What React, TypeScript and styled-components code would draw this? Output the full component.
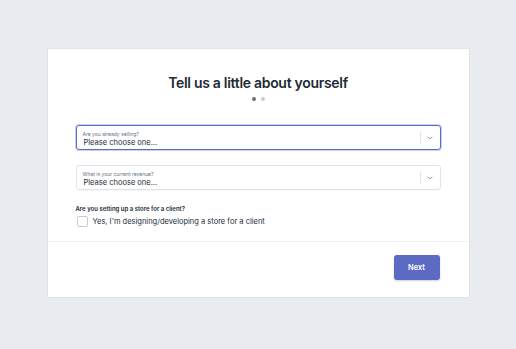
import React from "react";
import styled, { createGlobalStyle } from "styled-components";

const GlobalStyle = createGlobalStyle`
  html, body {
    margin: 0;
    padding: 0;
    background: #e8ebef;
    font-family: Inter, "Noto Sans", sans-serif;
    color: #212b36;
  }
`;

const Page = styled.div`
  width: 516px;
  height: 349px;
  display: flex;
  align-items: flex-start;
  justify-content: center;
  padding-top: 49px;
  box-sizing: border-box;
`;

const Card = styled.div`
  width: 421px;
  height: 248px;
  background: #ffffff;
  box-shadow: 0 0 0 1px rgba(63, 63, 68, 0.04);
  display: flex;
  flex-direction: column;
`;

const Body = styled.div`
  padding: 25px 28px 0;
  display: flex;
  flex-direction: column;
`;

const Title = styled.h1`
  margin: 0;
  text-align: center;
  font-size: 14px;
  font-weight: 600;
  letter-spacing: -0.3px;
  line-height: 17px;
  color: #212b36;
`;

const Dots = styled.div`
  display: flex;
  justify-content: center;
  gap: 5px;
  margin-top: 6px;
  margin-bottom: 24px;
`;

const Dot = styled.span<{ $active?: boolean }>`
  width: 4px;
  height: 4px;
  border-radius: 50%;
  background: ${(p) => (p.$active ? "#637381" : "#c4cdd5")};
`;

const Select = styled.div<{ $focused?: boolean }>`
  height: 25px;
  box-sizing: border-box;
  border: 1px solid ${(p) => (p.$focused ? "#5c6ac4" : "#dfe3e8")};
  box-shadow: ${(p) =>
    p.$focused ? "0 0 0 1px rgba(92,106,196,0.3)" : "0 1px 0 rgba(22,29,37,0.03)"};
  border-radius: 3px;
  display: flex;
  align-items: center;
  margin-bottom: 15px;
`;

const SelectText = styled.div`
  flex: 1;
  padding: 3px 0 0 6px;
  display: flex;
  flex-direction: column;
`;

const SelectLabel = styled.span`
  font-size: 5px;
  color: #637381;
  line-height: 7px;
`;

const SelectValue = styled.span`
  font-size: 7.5px;
  color: #212b36;
  line-height: 10px;
  padding-left: 1px;
`;

const Arrow = styled.div`
  width: 19px;
  height: 12px;
  border-left: 1px solid #dfe3e8;
  display: flex;
  align-items: center;
  justify-content: center;
  color: #8c97a4;
`;

const Question = styled.div`
  font-size: 6px;
  font-weight: 600;
  color: #212b36;
  line-height: 7px;
`;

const CheckRow = styled.label`
  display: flex;
  align-items: center;
  gap: 5px;
  margin-top: 4px;
  font-size: 7.5px;
  line-height: 11px;
  color: #212b36;
`;

const Box = styled.span`
  width: 9px;
  height: 9px;
  border: 1px solid #c4cdd5;
  border-radius: 2px;
  background: #fff;
  margin-left: 1px;
`;

const Divider = styled.div`
  height: 1px;
  background: #eef0f2;
  margin-top: 14px;
`;

const Footer = styled.div`
  display: flex;
  justify-content: flex-end;
  padding: 13px 29px 0;
`;

const NextButton = styled.button`
  width: 46px;
  height: 25px;
  border: none;
  border-radius: 3px;
  background: #5c6ac4;
  color: #ffffff;
  font-family: Inter, "Noto Sans", sans-serif;
  font-size: 7.5px;
  font-weight: 600;
  box-shadow: 0 1px 2px rgba(22, 29, 37, 0.2);
  cursor: pointer;
`;

const Chevron = () => (
  <svg width="8" height="8" viewBox="0 0 10 10" fill="none">
    <path d="M2.5 3.8 L5 6.3 L7.5 3.8" stroke="currentColor" strokeWidth="1.1" strokeLinecap="round" strokeLinejoin="round" />
  </svg>
);

export default function App() {
  return (
    <Page>
      <GlobalStyle />
      <Card>
        <Body>
          <Title>Tell us a little about yourself</Title>
          <Dots>
            <Dot $active />
            <Dot />
          </Dots>
          <Select $focused>
            <SelectText>
              <SelectLabel>Are you already selling?</SelectLabel>
              <SelectValue>Please choose one...</SelectValue>
            </SelectText>
            <Arrow>
              <Chevron />
            </Arrow>
          </Select>
          <Select>
            <SelectText>
              <SelectLabel>What is your current revenue?</SelectLabel>
              <SelectValue>Please choose one...</SelectValue>
            </SelectText>
            <Arrow>
              <Chevron />
            </Arrow>
          </Select>
          <Question>Are you setting up a store for a client?</Question>
          <CheckRow>
            <Box />
            Yes, I'm designing/developing a store for a client
          </CheckRow>
        </Body>
        <Divider />
        <Footer>
          <NextButton>Next</NextButton>
        </Footer>
      </Card>
    </Page>
  );
}
